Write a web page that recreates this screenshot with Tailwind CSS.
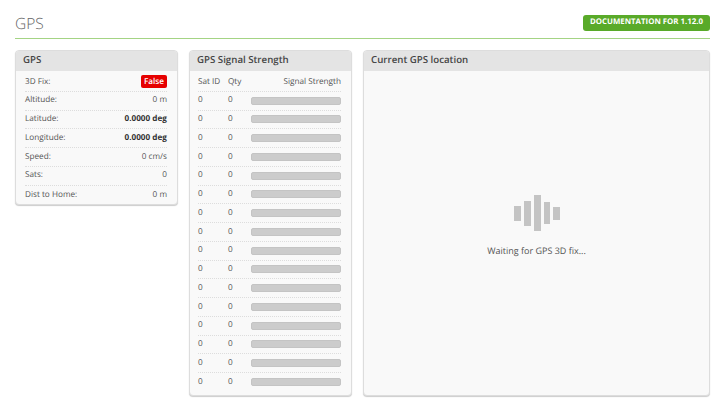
<!DOCTYPE html>
<html>
<head>
<meta charset="utf-8">
<script src="https://cdn.jsdelivr.net/npm/@tailwindcss/browser@4"></script>
</head>
<body class="bg-white font-['Open_Sans',sans-serif] [text-rendering:geometricPrecision] text-[8.2px] text-[#555] w-[725px] h-[410px] overflow-hidden">
<div class="px-[15px]">
  <div class="flex items-center justify-between h-[39px] border-b border-[#a4d484] pt-[10px] pb-[2px]">
    <h1 class="mt-[1px] text-[15.5px] leading-none font-light text-[#666]">GPS</h1>
    <span class="flex items-center h-[16px] px-[7px] rounded-[3px] bg-[#59aa29] text-white text-[7.85px] font-bold uppercase">Documentation for 1.12.0</span>
  </div>
  <div class="flex items-start gap-[11px] mt-[11px]">
    <section class="w-[163px] rounded-[4px] border border-[#ddd] bg-[#f9f9f9] shadow-[0_1px_1px_#ccc]">
      <h2 class="h-[20px] pb-[.5px] flex items-center px-[7px] bg-[#e4e4e4] rounded-t-[3px] text-[9.7px] font-semibold text-[#444]">GPS</h2>
      <div class="pl-[9px] pr-[10px] pt-[2px]">
        <div class="flex items-center justify-between h-[18.75px] border-b border-dotted border-[#ddd]"><span>3D Fix:</span><span class="rounded-[2px] bg-[#e60000] text-white font-semibold px-[3px] h-[13px] leading-[13px]">False</span></div>
        <div class="flex items-center justify-between h-[18.75px] border-b border-dotted border-[#ddd]"><span>Altitude:</span><span>0 m</span></div>
        <div class="flex items-center justify-between h-[18.75px] border-b border-dotted border-[#ddd]"><span>Latitude:</span><span class="font-bold text-[#333]">0.0000 deg</span></div>
        <div class="flex items-center justify-between h-[18.75px] border-b border-dotted border-[#ddd]"><span>Longitude:</span><span class="font-bold text-[#333]">0.0000 deg</span></div>
        <div class="flex items-center justify-between h-[18.75px] border-b border-dotted border-[#ddd]"><span>Speed:</span><span>0 cm/s</span></div>
        <div class="flex items-center justify-between h-[18.75px] border-b border-dotted border-[#ddd]"><span>Sats:</span><span>0</span></div>
        <div class="flex items-center justify-between h-[18.75px]"><span>Dist to Home:</span><span>0 m</span></div>
      </div>
    </section>
    <section class="w-[163px] h-[346px] rounded-[4px] border border-[#ddd] bg-[#f9f9f9] shadow-[0_1px_1px_#ccc]">
      <h2 class="h-[20px] pb-[.5px] flex items-center px-[7px] bg-[#e4e4e4] rounded-t-[3px] text-[9.7px] font-semibold text-[#444]">GPS Signal Strength</h2>
      <div class="pl-[8px] pr-[10px] pt-[2px]">
        <div class="flex items-center h-[18.75px] border-b border-dotted border-[#ddd]"><span class="w-[30px]">Sat ID</span><span class="w-[23px]">Qty</span><span class="flex-1 text-right">Signal Strength</span></div>
        <div class="flex items-center h-[18.75px] border-b border-dotted border-[#ddd]"><span class="w-[30px]">0</span><span class="w-[23px]">0</span><span class="flex-1 h-[8px] rounded-[2px] bg-[#ccc] border border-[#c4c4c4]"></span></div>
        <div class="flex items-center h-[18.75px] border-b border-dotted border-[#ddd]"><span class="w-[30px]">0</span><span class="w-[23px]">0</span><span class="flex-1 h-[8px] rounded-[2px] bg-[#ccc] border border-[#c4c4c4]"></span></div>
        <div class="flex items-center h-[18.75px] border-b border-dotted border-[#ddd]"><span class="w-[30px]">0</span><span class="w-[23px]">0</span><span class="flex-1 h-[8px] rounded-[2px] bg-[#ccc] border border-[#c4c4c4]"></span></div>
        <div class="flex items-center h-[18.75px] border-b border-dotted border-[#ddd]"><span class="w-[30px]">0</span><span class="w-[23px]">0</span><span class="flex-1 h-[8px] rounded-[2px] bg-[#ccc] border border-[#c4c4c4]"></span></div>
        <div class="flex items-center h-[18.75px] border-b border-dotted border-[#ddd]"><span class="w-[30px]">0</span><span class="w-[23px]">0</span><span class="flex-1 h-[8px] rounded-[2px] bg-[#ccc] border border-[#c4c4c4]"></span></div>
        <div class="flex items-center h-[18.75px] border-b border-dotted border-[#ddd]"><span class="w-[30px]">0</span><span class="w-[23px]">0</span><span class="flex-1 h-[8px] rounded-[2px] bg-[#ccc] border border-[#c4c4c4]"></span></div>
        <div class="flex items-center h-[18.75px] border-b border-dotted border-[#ddd]"><span class="w-[30px]">0</span><span class="w-[23px]">0</span><span class="flex-1 h-[8px] rounded-[2px] bg-[#ccc] border border-[#c4c4c4]"></span></div>
        <div class="flex items-center h-[18.75px] border-b border-dotted border-[#ddd]"><span class="w-[30px]">0</span><span class="w-[23px]">0</span><span class="flex-1 h-[8px] rounded-[2px] bg-[#ccc] border border-[#c4c4c4]"></span></div>
        <div class="flex items-center h-[18.75px] border-b border-dotted border-[#ddd]"><span class="w-[30px]">0</span><span class="w-[23px]">0</span><span class="flex-1 h-[8px] rounded-[2px] bg-[#ccc] border border-[#c4c4c4]"></span></div>
        <div class="flex items-center h-[18.75px] border-b border-dotted border-[#ddd]"><span class="w-[30px]">0</span><span class="w-[23px]">0</span><span class="flex-1 h-[8px] rounded-[2px] bg-[#ccc] border border-[#c4c4c4]"></span></div>
        <div class="flex items-center h-[18.75px] border-b border-dotted border-[#ddd]"><span class="w-[30px]">0</span><span class="w-[23px]">0</span><span class="flex-1 h-[8px] rounded-[2px] bg-[#ccc] border border-[#c4c4c4]"></span></div>
        <div class="flex items-center h-[18.75px] border-b border-dotted border-[#ddd]"><span class="w-[30px]">0</span><span class="w-[23px]">0</span><span class="flex-1 h-[8px] rounded-[2px] bg-[#ccc] border border-[#c4c4c4]"></span></div>
        <div class="flex items-center h-[18.75px] border-b border-dotted border-[#ddd]"><span class="w-[30px]">0</span><span class="w-[23px]">0</span><span class="flex-1 h-[8px] rounded-[2px] bg-[#ccc] border border-[#c4c4c4]"></span></div>
        <div class="flex items-center h-[18.75px] border-b border-dotted border-[#ddd]"><span class="w-[30px]">0</span><span class="w-[23px]">0</span><span class="flex-1 h-[8px] rounded-[2px] bg-[#ccc] border border-[#c4c4c4]"></span></div>
        <div class="flex items-center h-[18.75px] border-b border-dotted border-[#ddd]"><span class="w-[30px]">0</span><span class="w-[23px]">0</span><span class="flex-1 h-[8px] rounded-[2px] bg-[#ccc] border border-[#c4c4c4]"></span></div>
        <div class="flex items-center h-[18.75px]"><span class="w-[30px]">0</span><span class="w-[23px]">0</span><span class="flex-1 h-[8px] rounded-[2px] bg-[#ccc] border border-[#c4c4c4]"></span></div>
      </div>
    </section>
    <section class="w-[347px] h-[346px] flex flex-col rounded-[4px] border border-[#ddd] bg-[#f9f9f9] shadow-[0_1px_1px_#ccc]">
      <h2 class="h-[20px] pb-[.5px] shrink-0 flex items-center px-[7px] bg-[#e4e4e4] rounded-t-[3px] text-[9.7px] font-semibold text-[#444]">Current GPS location</h2>
      <div class="flex flex-col items-center pt-[124px]">
        <div class="flex items-center gap-[3px] h-[36px]">
          <span class="w-[7px] h-[15px] bg-[#c4c4c4]"></span>
          <span class="w-[7px] h-[25px] bg-[#c4c4c4]"></span>
          <span class="w-[7px] h-[36px] bg-[#c4c4c4]"></span>
          <span class="w-[6px] h-[22px] bg-[#c4c4c4]"></span>
          <span class="w-[7px] h-[13px] bg-[#c4c4c4]"></span>
        </div>
        <p class="mt-[13px] text-[9px] text-[#555]">Waiting for GPS 3D fix...</p>
      </div>
    </section>
  </div>
</div>
</body>
</html>
